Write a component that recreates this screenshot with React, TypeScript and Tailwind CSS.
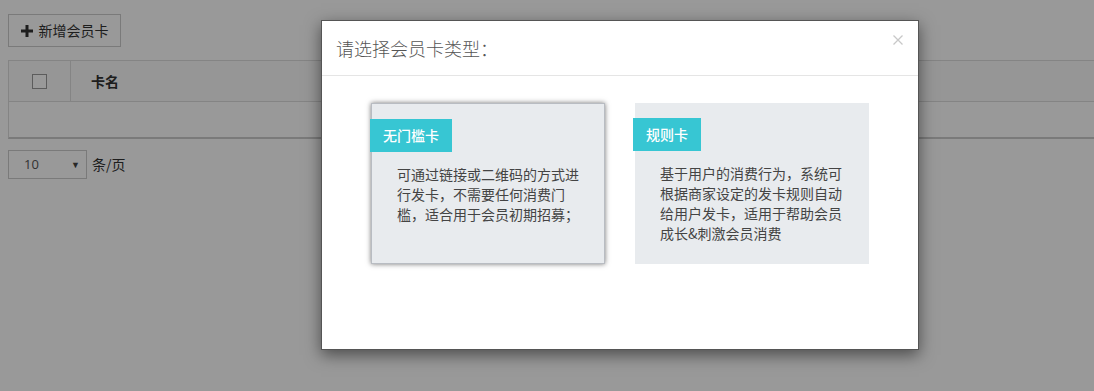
import React from "react";

const font = { fontFamily: '"Microsoft YaHei", "Noto Sans CJK SC", "Liberation Sans", sans-serif' };

function Card({ label, text, selected }: { label: string; text: string; selected?: boolean }) {
  return (
    <div
      className={
        "w-[234px] h-[161px] bg-[#e8ebee] pt-[15px] " +
        (selected ? "shadow-[0_0_5px_rgba(0,0,0,0.55)] border border-[#b8bcc2]" : "")
      }
    >
      <div className="inline-block -ml-[2px] h-[33px] leading-[33px] px-[13px] bg-[#37c6d3] text-white text-[14px] font-medium">
        {label}
      </div>
      <p className="mt-[12px] px-[25px] text-[14px] leading-[20px] text-[#444]">{text}</p>
    </div>
  );
}

export default function App() {
  return (
    <div className="relative w-[1094px] h-[391px] bg-white overflow-hidden" style={font}>
      {/* page */}
      <div className="pt-[14px] pl-[8px]">
        <button className="h-[33px] w-[113px] border border-[#ccc] flex items-center justify-center gap-[6px] text-[14px] text-[#333] bg-white">
          <svg width="12" height="12" viewBox="0 0 12 12">
            <rect x="4.5" y="0" width="3" height="12" fill="#333" />
            <rect x="0" y="4.5" width="12" height="3" fill="#333" />
          </svg>
          <span>新增会员卡</span>
        </button>
        <div className="mt-[13px] border-t border-l border-[#ddd] border-b-2 border-b-[#ccc]">
          <div className="flex h-[41px] border-b border-[#ddd] bg-[#fafafa]">
            <div className="w-[62px] flex items-center justify-center border-r border-[#ddd]">
              <div className="w-[15px] h-[15px] border border-[#999] bg-white" />
            </div>
            <div className="flex items-center pl-[20px] text-[14px] font-bold text-[#333]">卡名</div>
          </div>
          <div className="h-[35px]" />
        </div>
        <div className="mt-[11px] flex items-center gap-[5px]">
          <div className="w-[79px] h-[29px] border border-[#ccc] flex items-center justify-between pl-[15px] pr-[6px] text-[13px] text-[#555]" style={{ fontFamily: '"Open Sans", "Liberation Sans", sans-serif' }}>
            <span>10</span>
            <span className="text-[9px] text-[#444]">▼</span>
          </div>
          <span className="text-[14px] text-[#333]">条/页</span>
        </div>
      </div>

      {/* overlay */}
      <div className="absolute inset-0 bg-black/40" />

      {/* modal */}
      <div className="absolute left-[321px] top-[20px] w-[598px] h-[330px] bg-white border border-[#555] shadow-[0_5px_15px_rgba(0,0,0,0.5)]">
        <div className="h-[55px] border-b border-[#e5e5e5] flex items-center pl-[14px] relative">
          <span className="text-[18px] font-light text-[#555]">请选择会员卡类型：</span>
          <svg className="absolute right-[15px] top-[14px]" width="10" height="10" viewBox="0 0 10 10">
            <path d="M0.5 0.5 L9.5 9.5 M9.5 0.5 L0.5 9.5" stroke="#c8c8c8" strokeWidth="1.3" />
          </svg>
        </div>
        <div className="flex gap-[30px] pl-[49px] pt-[27px]">
          <Card
            selected
            label="无门槛卡"
            text="可通过链接或二维码的方式进行发卡，不需要任何消费门槛，适合用于会员初期招募；"
          />
          <Card
            label="规则卡"
            text="基于用户的消费行为，系统可根据商家设定的发卡规则自动给用户发卡，适用于帮助会员成长&刺激会员消费"
          />
        </div>
      </div>
    </div>
  );
}
